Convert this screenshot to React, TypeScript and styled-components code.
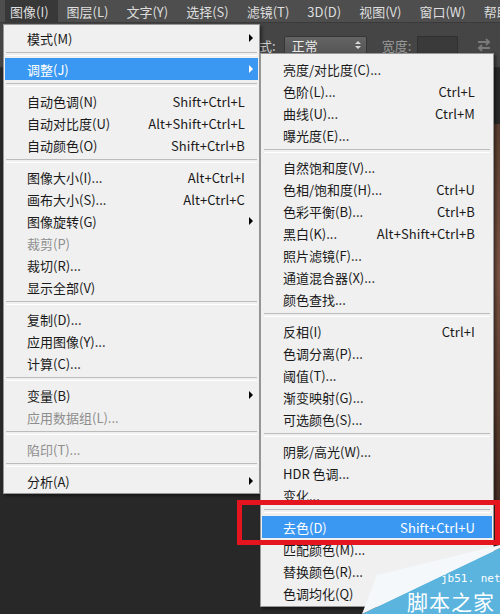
import React from "react";
import styled, { createGlobalStyle } from "styled-components";

const GlobalStyle = createGlobalStyle`
  html, body { margin: 0; padding: 0; background: #282828; }
  body { font-family: "Noto Sans CJK SC", "Noto Sans", sans-serif; }
  * { box-sizing: border-box; }
`;

const FONT = `"Noto Sans CJK SC", "Noto Sans", sans-serif`;

const Page = styled.div`
  position: relative;
  width: 500px;
  height: 614px;
  overflow: hidden;
  display: flex;
  flex-direction: column;
  background: #282828;
  font-family: ${FONT};
`;

const MenuBar = styled.div`
  height: 22px;
  display: flex;
  align-items: stretch;
  padding-left: 1px;
  background: #4e4e4e;
  flex: none;
  overflow: hidden;
`;

const MenuBarItem = styled.div<{ $active?: boolean }>`
  display: flex;
  align-items: center;
  padding: 0 9px 0 9px;
  font-size: 13px;
  color: #dedede;
  white-space: nowrap;
  flex: none;
  background: ${(p) => (p.$active ? "#383838" : "transparent")};
  ${(p) => (p.$active ? "margin-left: 4px; padding-left: 5px; padding-right: 9px;" : "")}
`;

const OptionsBar = styled.div`
  height: 46px;
  flex: none;
  display: flex;
  align-items: center;
  padding-left: 246px;
  background: #454545;
  border-top: 1px solid #3a3a3a;
  border-bottom: 1px solid #2e2e2e;
`;

const OptLabel = styled.span<{ $dim?: boolean }>`
  font-size: 13px;
  color: ${(p) => (p.$dim ? "#9a9a9a" : "#cfcfcf")};
  white-space: nowrap;
`;

const Dropdown = styled.div`
  margin-left: 8px;
  width: 83px;
  height: 19px;
  display: flex;
  align-items: center;
  justify-content: space-between;
  padding: 0 5px 0 7px;
  border: 1px solid #353535;
  border-radius: 2px;
  background: linear-gradient(#646464, #545454);
  color: #ececec;
  font-size: 13px;
  margin-right: 15px;
`;

const InputBox = styled.div`
  margin-left: 6px;
  width: 41px;
  height: 19px;
  background: #3a3a3a;
  border: 1px solid #303030;
  margin-right: 18px;
`;

const Workspace = styled.div`
  flex: 1;
  display: flex;
  justify-content: flex-end;
  padding-top: 56px;
`;

const DocCanvas = styled.div`
  width: 30px;
  background: linear-gradient(180deg, #5a3d30 0%, #7a5342 30%, #4d3328 70%, #2e221d 100%);
`;

const MenuPanel = styled.div<{ $left: number; $top: number; $width: number; $padTop: number; $padBottom: number }>`
  position: absolute;
  left: ${(p) => p.$left}px;
  top: ${(p) => p.$top}px;
  width: ${(p) => p.$width}px;
  padding: ${(p) => p.$padTop}px 1px ${(p) => p.$padBottom}px 1px;
  background: #f0f0f0;
  border: 1px solid #979797;
  box-shadow: 2px 2px 3px rgba(0, 0, 0, 0.45);
  display: flex;
  flex-direction: column;
`;

const Item = styled.div<{ $hl?: boolean; $disabled?: boolean; $indent: number; $right: number }>`
  height: 22px;
  display: flex;
  align-items: center;
  padding-left: ${(p) => p.$indent}px;
  padding-right: ${(p) => p.$right}px;
  font-size: 13px;
  white-space: nowrap;
  position: relative;
  background: ${(p) => (p.$hl ? "#3b98f2" : "transparent")};
  color: ${(p) => (p.$hl ? "#ffffff" : p.$disabled ? "#8e8e8e" : "#1a1a1a")};
`;

const ItemLabel = styled.span`
  flex: 1;
`;

const Shortcut = styled.span`
  letter-spacing: 0.1px;
`;

const Arrow = styled.span<{ $hl?: boolean }>`
  position: absolute;
  right: 5px;
  top: 7px;
  width: 0;
  height: 0;
  border-top: 4px solid transparent;
  border-bottom: 4px solid transparent;
  border-left: 4px solid ${(p) => (p.$hl ? "#ffffff" : "#000000")};
`;

const Separator = styled.div<{ $h: number; $inset: number }>`
  height: ${(p) => p.$h}px;
  display: flex;
  align-items: center;
  padding: 0 ${(p) => p.$inset}px;
  &::after {
    content: "";
    flex: 1;
    height: 2px;
    border-top: 1px solid #bcbcbc;
    border-bottom: 1px solid #ffffff;
  }
`;

const RedBox = styled.div`
  position: absolute;
  left: 237px;
  top: 500px;
  width: 263px;
  height: 45px;
  border: 5px solid #e5151f;
`;

const Watermark = styled.div`
  position: absolute;
  right: 0;
  bottom: 0;
  width: 140px;
  height: 70px;
`;

const WmSite = styled.span`
  position: absolute;
  left: 81px;
  top: 29px;
  font-family: "DejaVu Sans Mono", monospace;
  font-size: 11px;
  line-height: 12px;
  color: #ffffff;
  white-space: nowrap;
`;

const WmName = styled.span`
  position: absolute;
  left: 47px;
  top: 46px;
  font-family: ${FONT};
  font-size: 21px;
  line-height: 22px;
  color: #ffffff;
  white-space: nowrap;
  letter-spacing: 1px;
`;

type Entry =
  | { sep: number }
  | { label: string; shortcut?: string; arrow?: boolean; disabled?: boolean; hl?: boolean };

const leftMenu: Entry[] = [
  { label: "模式(M)", arrow: true },
  { sep: 9 },
  { label: "调整(J)", arrow: true, hl: true },
  { sep: 10 },
  { label: "自动色调(N)", shortcut: "Shift+Ctrl+L" },
  { label: "自动对比度(U)", shortcut: "Alt+Shift+Ctrl+L" },
  { label: "自动颜色(O)", shortcut: "Shift+Ctrl+B" },
  { sep: 10 },
  { label: "图像大小(I)...", shortcut: "Alt+Ctrl+I" },
  { label: "画布大小(S)...", shortcut: "Alt+Ctrl+C" },
  { label: "图像旋转(G)", arrow: true },
  { label: "裁剪(P)", disabled: true },
  { label: "裁切(R)..." },
  { label: "显示全部(V)" },
  { sep: 10 },
  { label: "复制(D)..." },
  { label: "应用图像(Y)..." },
  { label: "计算(C)..." },
  { sep: 10 },
  { label: "变量(B)", arrow: true },
  { label: "应用数据组(L)...", disabled: true },
  { sep: 10 },
  { label: "陷印(T)...", disabled: true },
  { sep: 10 },
  { label: "分析(A)", arrow: true },
];

const subMenu: Entry[] = [
  { label: "亮度/对比度(C)..." },
  { label: "色阶(L)...", shortcut: "Ctrl+L" },
  { label: "曲线(U)...", shortcut: "Ctrl+M" },
  { label: "曝光度(E)..." },
  { sep: 10 },
  { label: "自然饱和度(V)..." },
  { label: "色相/饱和度(H)...", shortcut: "Ctrl+U" },
  { label: "色彩平衡(B)...", shortcut: "Ctrl+B" },
  { label: "黑白(K)...", shortcut: "Alt+Shift+Ctrl+B" },
  { label: "照片滤镜(F)..." },
  { label: "通道混合器(X)..." },
  { label: "颜色查找..." },
  { sep: 10 },
  { label: "反相(I)", shortcut: "Ctrl+I" },
  { label: "色调分离(P)..." },
  { label: "阈值(T)..." },
  { label: "渐变映射(G)..." },
  { label: "可选颜色(S)..." },
  { sep: 10 },
  { label: "阴影/高光(W)..." },
  { label: "HDR 色调..." },
  { label: "变化..." },
  { sep: 10 },
  { label: "去色(D)", shortcut: "Shift+Ctrl+U", hl: true },
  { label: "匹配颜色(M)..." },
  { label: "替换颜色(R)..." },
  { label: "色调均化(Q)" },
];

function MenuList({ entries, indent, right, sepInset }: { entries: Entry[]; indent: number; right: number; sepInset: number }) {
  return (
    <>
      {entries.map((e, i) =>
        "sep" in e ? (
          <Separator key={i} $h={e.sep} $inset={sepInset} />
        ) : (
          <Item key={i} $hl={e.hl} $disabled={e.disabled} $indent={indent} $right={right}>
            <ItemLabel>{e.label}</ItemLabel>
            {e.shortcut && <Shortcut>{e.shortcut}</Shortcut>}
            {e.arrow && <Arrow $hl={e.hl} />}
          </Item>
        )
      )}
    </>
  );
}

const topMenus = ["图层(L)", "文字(Y)", "选择(S)", "滤镜(T)", "3D(D)", "视图(V)", "窗口(W)", "帮助"];

export default function App() {
  return (
    <>
      <GlobalStyle />
      <Page>
        <MenuBar>
          <MenuBarItem $active>图像(I)</MenuBarItem>
          {topMenus.map((m) => (
            <MenuBarItem key={m}>{m}</MenuBarItem>
          ))}
        </MenuBar>
        <OptionsBar>
          <OptLabel>模式:</OptLabel>
          <Dropdown>
            <span>正常</span>
            <svg width="6" height="10" viewBox="0 0 6 10">
              <path d="M0 4 L3 1 L6 4 Z M0 6 L3 9 L6 6 Z" fill="#d8d8d8" />
            </svg>
          </Dropdown>
          <OptLabel $dim>宽度:</OptLabel>
          <InputBox />
          <svg width="16" height="14" viewBox="0 0 16 14">
            <path d="M2 4 H13 M10 1 L13 4 L10 7" stroke="#7a7a7a" strokeWidth="2" fill="none" />
            <path d="M14 10 H3 M6 7 L3 10 L6 13" stroke="#7a7a7a" strokeWidth="2" fill="none" />
          </svg>
        </OptionsBar>
        <Workspace>
          <DocCanvas />
        </Workspace>

        <MenuPanel $left={3} $top={24} $width={257} $padTop={2} $padBottom={1}>
          <MenuList entries={leftMenu} indent={22} right={13} sepInset={1} />
        </MenuPanel>

        <MenuPanel $left={260} $top={53} $width={234} $padTop={4} $padBottom={2}>
          <MenuList entries={subMenu} indent={21} right={17} sepInset={2} />
        </MenuPanel>

        <RedBox />

        <Watermark>
          <svg width="140" height="70" viewBox="0 0 140 70" style={{ position: "absolute", left: 0, top: 0 }}>
            <polygon points="2,70 140,4 140,70" fill="#5ab4de" />
            <polygon points="2,70 17,31 140,1 140,4" fill="#f4f8fb" />
          </svg>
          <WmSite>jb51. net</WmSite>
          <WmName>脚本之家</WmName>
        </Watermark>
      </Page>
    </>
  );
}
